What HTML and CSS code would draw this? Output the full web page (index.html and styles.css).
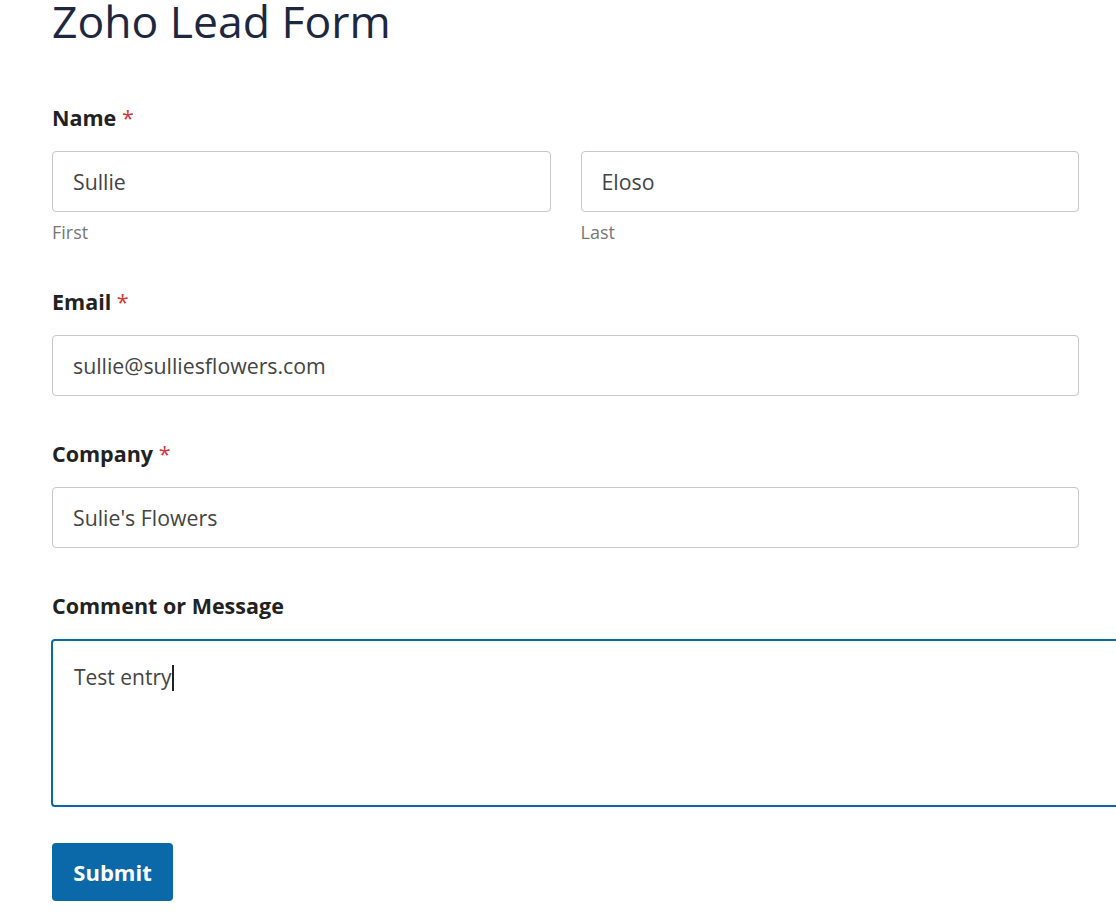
FILE: index.html
```html
<!DOCTYPE html>
<html lang="en">
<head>
<meta charset="utf-8">
<title>Zoho Lead Form</title>
<link rel="stylesheet" href="styles.css">
</head>
<body>
<main class="page">
  <h1 class="title">Zoho Lead Form</h1>
  <form class="form">
    <div class="field">
      <div class="label">Name <span class="req">*</span></div>
      <div class="name-row">
        <div class="name-col">
          <div class="input">Sullie</div>
          <div class="sublabel">First</div>
        </div>
        <div class="name-col">
          <div class="input">Eloso</div>
          <div class="sublabel">Last</div>
        </div>
      </div>
    </div>
    <div class="field">
      <div class="label">Email <span class="req">*</span></div>
      <div class="input">sullie@sulliesflowers.com</div>
    </div>
    <div class="field">
      <div class="label">Company <span class="req">*</span></div>
      <div class="input">Sulie's Flowers</div>
    </div>
    <div class="field">
      <div class="label">Comment or Message</div>
      <div class="textarea">Test entry<span class="caret"></span></div>
    </div>
    <div class="actions">
      <button type="button" class="submit">Submit</button>
    </div>
  </form>
</main>
</body>
</html>
```
FILE: styles.css
```css
html, body {
  margin: 0;
  padding: 0;
  background: #ffffff;
  overflow: hidden;
}
body {
  font-family: "Open Sans", "Noto Sans", sans-serif;
  color: #222222;
}
.page {
  width: 1027px;
  padding-left: 52px;
}
.title {
  margin: 0;
  font-size: 44.5px;
  line-height: 42px;
  font-weight: 400;
  color: #1d2740;
}
.form {
  margin-top: 63px;
  display: flex;
  flex-direction: column;
}
.field {
  display: flex;
  flex-direction: column;
  margin-bottom: 45px;
}
.label {
  font-size: 21.5px;
  line-height: 26px;
  font-weight: 700;
  color: #222222;
  margin-bottom: 20px;
}
.req {
  color: #d63638;
  font-weight: 400;
}
.name-row {
  display: flex;
  gap: 30px;
}
.name-col {
  flex: 1;
  display: flex;
  flex-direction: column;
}
.input {
  box-sizing: border-box;
  height: 61px;
  border: 1px solid #c8c8c8;
  border-radius: 4px;
  padding: 0 20px;
  display: flex;
  align-items: center;
  font-size: 21.3px;
  color: #444444;
}
.sublabel {
  margin-top: 8px;
  font-size: 18px;
  line-height: 24px;
  color: #777777;
}
.textarea {
  box-sizing: border-box;
  width: 1100px;
  height: 168px;
  margin-left: -1px;
  border: 2px solid #0b69aa;
  border-radius: 4px;
  padding: 22px 21px;
  font-size: 21px;
  line-height: 28px;
  color: #444444;
}
.caret {
  display: inline-block;
  width: 2px;
  height: 26px;
  background: #222222;
  vertical-align: -6px;
}
.actions {
  margin-top: -9px;
}
.submit {
  box-sizing: border-box;
  width: 121px;
  height: 58px;
  border: none;
  border-radius: 4px;
  background: #0b69aa;
  color: #ffffff;
  font-family: "Open Sans", "Noto Sans", sans-serif;
  font-size: 22px;
  font-weight: 700;
  padding: 0;
}
```
